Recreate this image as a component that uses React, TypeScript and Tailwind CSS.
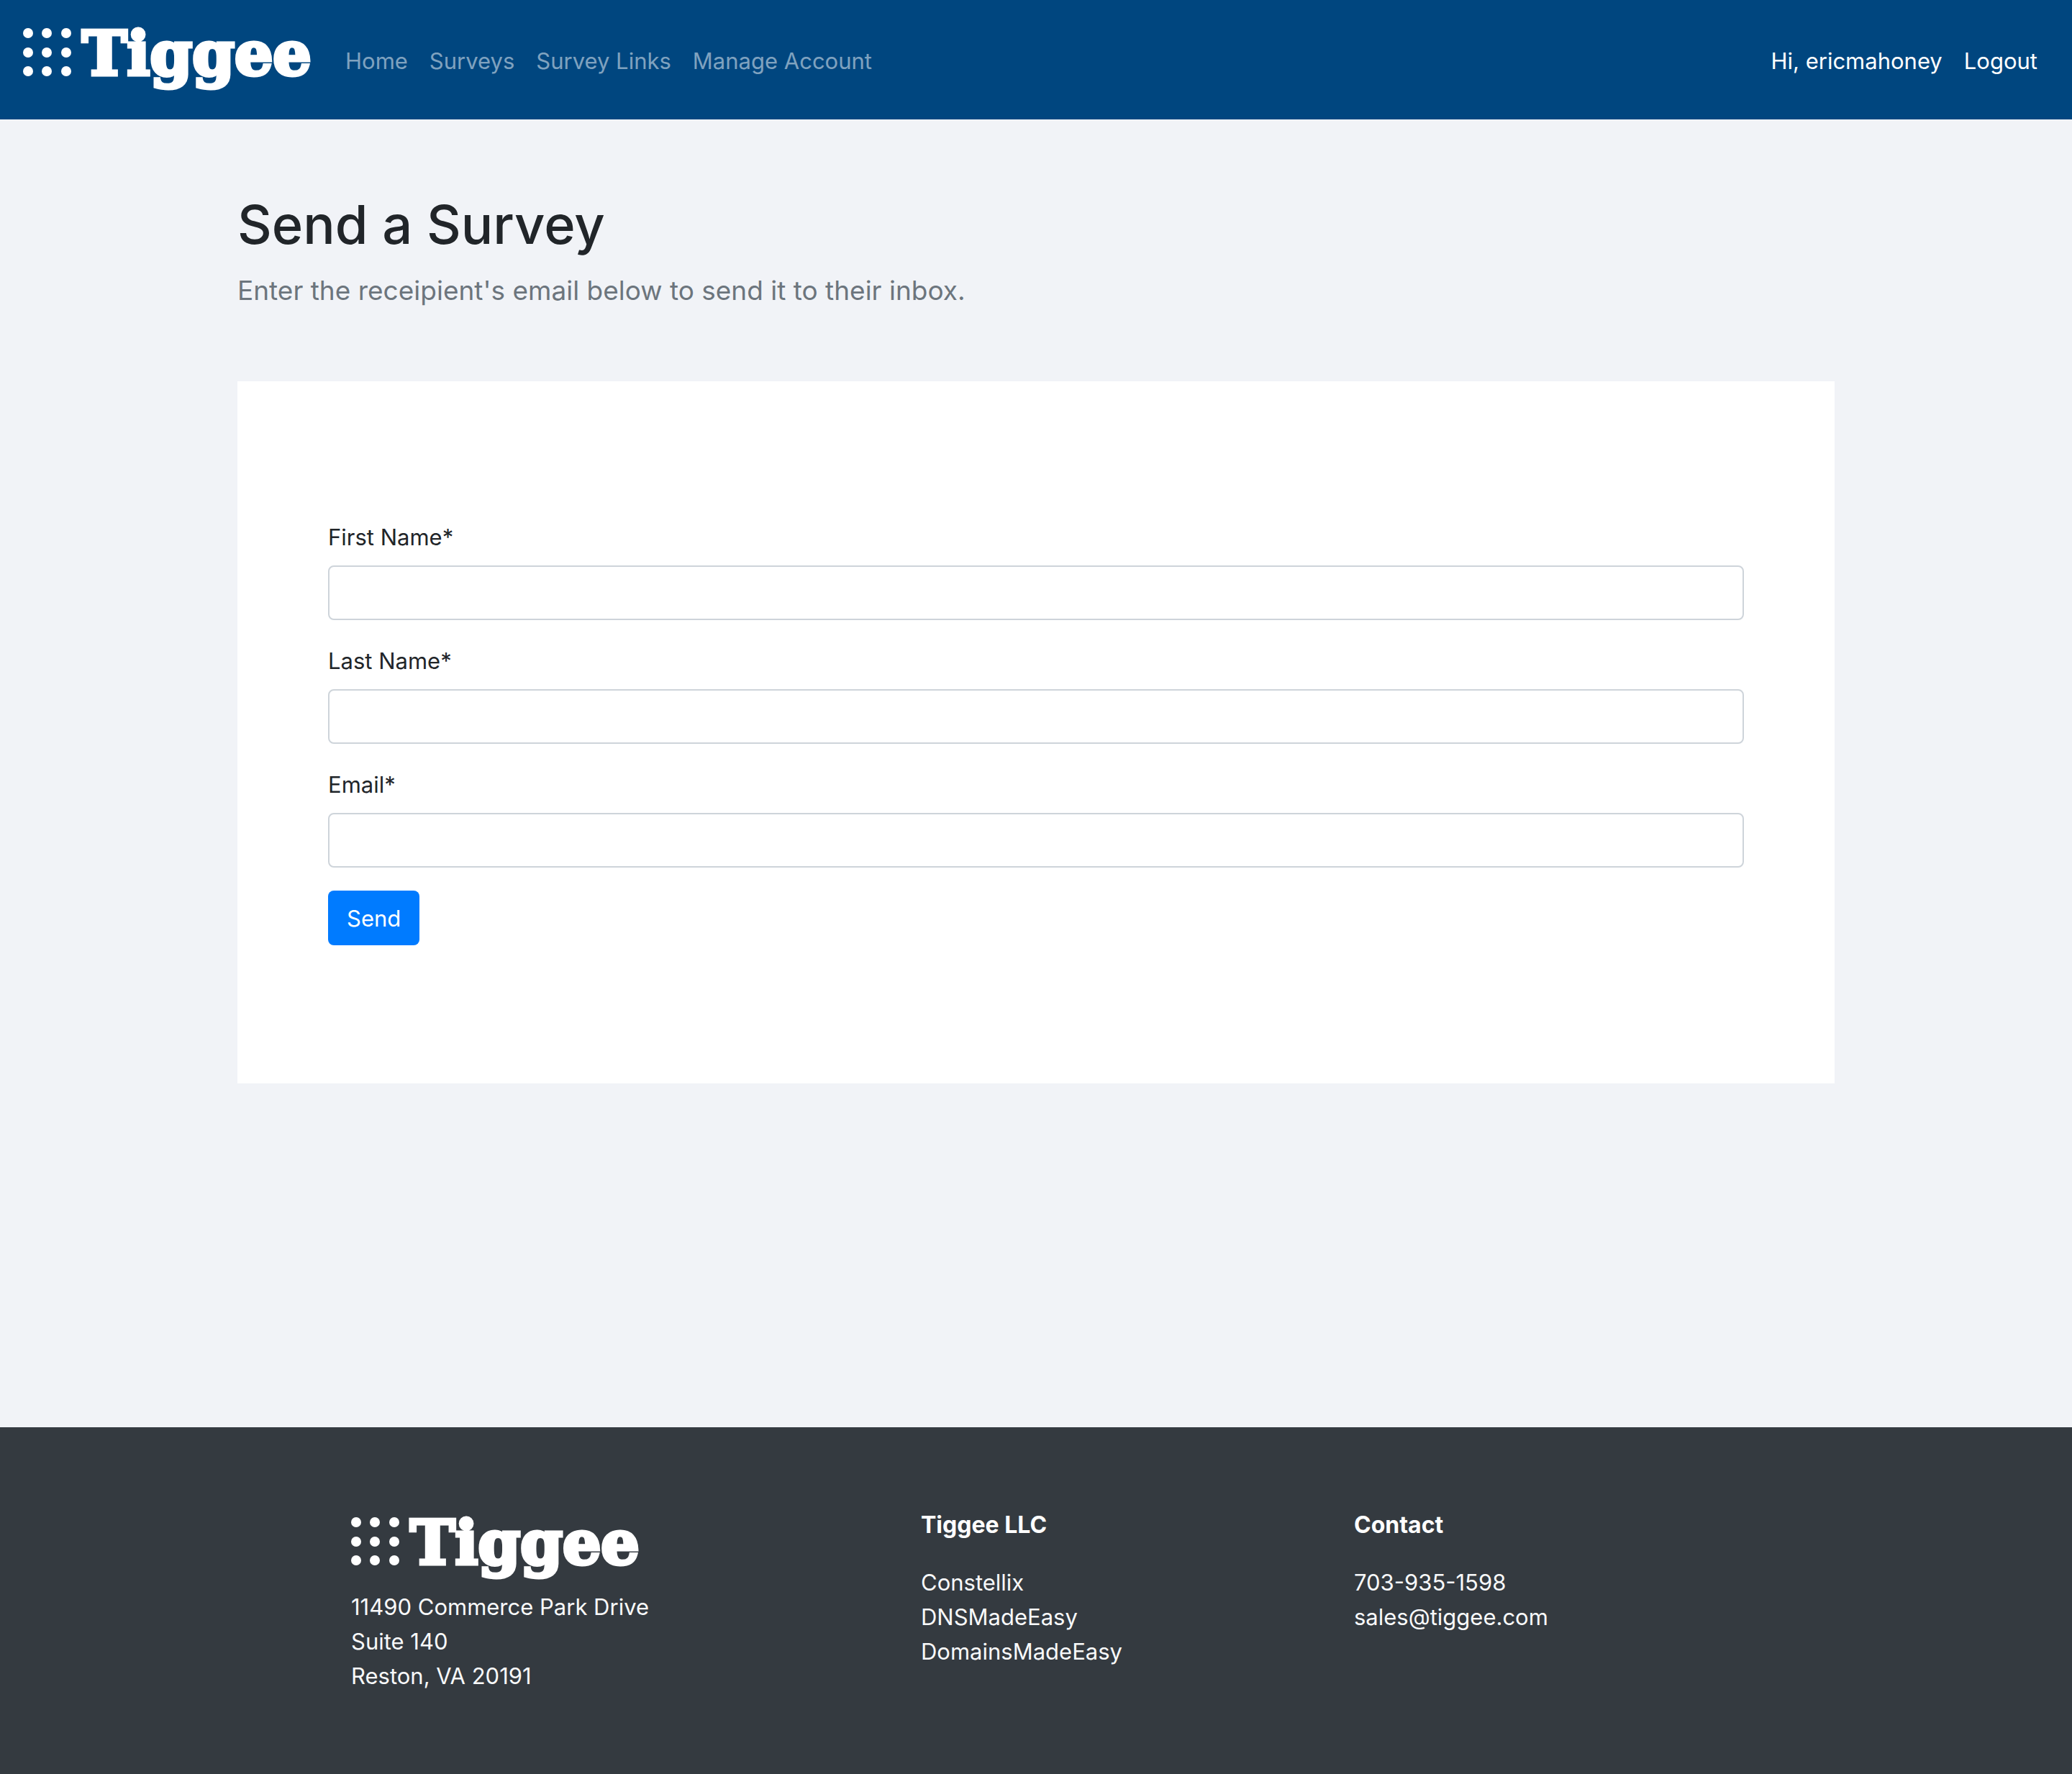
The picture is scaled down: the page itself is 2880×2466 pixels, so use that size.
import React from "react";

const dots = [20, 47, 73].flatMap((cy) => [7, 33, 60].map((cx) => ({ cx, cy })));

function Logo() {
  return (
    <svg viewBox="0 0 400 114" className="h-[114px] w-[400px] shrink-0 overflow-visible" role="img" aria-label="Tiggee">
      {dots.map((d) => (
        <circle key={`${d.cx}-${d.cy}`} cx={d.cx} cy={d.cy} r="7" fill="#fff" />
      ))}
      <text
        x="82"
        y="78"
        fill="#fff"
        stroke="#fff"
        strokeWidth="5"
        className="font-['DejaVu_Serif',serif] text-[84px] font-bold"
      >
        Tiggee
      </text>
    </svg>
  );
}

function Field({ id, label, type = "text" }: { id: string; label: string; type?: string }) {
  return (
    <div className="mb-8">
      <label htmlFor={id} className="mb-[14px] block leading-[50px]">
        {label}
      </label>
      <input
        id={id}
        type={type}
        required
        className="block h-[76px] w-full rounded-lg border-2 border-[#ced4da] bg-white px-6 shadow-none outline-none focus:border-[#80bdff]"
      />
    </div>
  );
}

const navLinks = ["Home", "Surveys", "Survey Links", "Manage Account"];

export default function App() {
  return (
    <div className="flex min-h-screen flex-col bg-[#f1f3f7] font-['Inter','Liberation_Sans',sans-serif] text-[31px] leading-[48px] text-[#212529]">
      <header className="flex items-center bg-[#00467f] px-8 py-[26px]">
        <a href="#" className="mr-12">
          <Logo />
        </a>
        <nav className="flex gap-[30px] pt-1 text-white/50">
          {navLinks.map((label) => (
            <a key={label} href="#">
              {label}
            </a>
          ))}
        </nav>
        <div className="mr-4 ml-auto flex gap-[30px] pt-1 text-white">
          <span>Hi, ericmahoney</span>
          <a href="#">Logout</a>
        </div>
      </header>

      <main className="mx-auto w-full max-w-[2220px] grow pt-24 pb-24">
        <h1 className="mb-3 text-[74px] leading-[100px] font-medium">Send a Survey</h1>
        <p className="mb-24 text-[37px] leading-[60px] text-[#6c757d]">
          Enter the receipient's email below to send it to their inbox.
        </p>
        <form className="bg-white px-[126px] py-48" onSubmit={(e) => e.preventDefault()}>
          <Field id="first-name" label="First Name*" />
          <Field id="last-name" label="Last Name*" />
          <Field id="email" label="Email*" type="email" />
          <button type="submit" className="block h-[76px] rounded-lg bg-[#007bff] px-[26px] pt-0.5 text-white">
            Send
          </button>
        </form>
      </main>

      <footer className="bg-[#343a40] py-28 text-[#f8f9fa]">
        <div className="mx-auto grid max-w-[2220px] grid-cols-[792fr_602fr_668fr] pl-[158px]">
          <div>
            <Logo />
            <address className="not-italic">
              11490 Commerce Park Drive
              <br />
              Suite 140
              <br />
              Reston, VA 20191
            </address>
          </div>
          <div>
            <h2 className="mb-8 text-[32px] font-bold text-white">Tiggee LLC</h2>
            <ul>
              <li><a href="#">Constellix</a></li>
              <li><a href="#">DNSMadeEasy</a></li>
              <li><a href="#">DomainsMadeEasy</a></li>
            </ul>
          </div>
          <div>
            <h2 className="mb-8 text-[32px] font-bold text-white">Contact</h2>
            <ul>
              <li>703-935-1598</li>
              <li><a href="#">sales@tiggee.com</a></li>
            </ul>
          </div>
        </div>
      </footer>
    </div>
  );
}
